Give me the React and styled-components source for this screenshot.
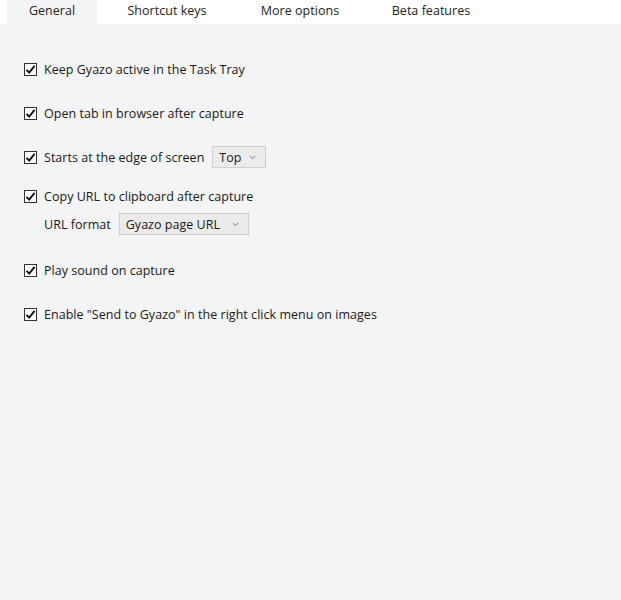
import React from "react";
import styled, { createGlobalStyle } from "styled-components";

const Global = createGlobalStyle`
  html, body { margin: 0; padding: 0; }
  body {
    background: #f3f4f5;
    font-family: "Open Sans", "Noto Sans", sans-serif;
    color: #1a1a1a;
  }
`;

const Page = styled.div`
  width: 621px;
  height: 600px;
  background: #f3f4f5;
  display: flex;
  flex-direction: column;
`;

const TabBar = styled.div`
  height: 24px;
  background: #ffffff;
  display: flex;
  align-items: stretch;
  padding-left: 7px;
`;

const Tab = styled.div`
  width: ${(p) => p.$w}px;
  display: flex;
  align-items: center;
  justify-content: center;
  font-size: 12.5px;
  letter-spacing: 0.03px;
  color: #222;
  background: ${(p) => (p.$active ? "#f3f4f5" : "#ffffff")};
  padding-bottom: 3px;
  box-sizing: border-box;
`;

const Content = styled.div`
  display: flex;
  flex-direction: column;
  padding: 34px 0 0 24px;
`;

const Row = styled.div`
  display: flex;
  align-items: center;
  height: 22px;
  margin-top: ${(p) => p.$mt || 0}px;
  padding-left: ${(p) => p.$indent || 0}px;
  font-size: 12.5px;
  letter-spacing: 0.03px;
`;

const Box = styled.span`
  width: 13px;
  height: 13px;
  box-sizing: border-box;
  border: 1px solid #333;
  background: #fff;
  display: inline-flex;
  align-items: center;
  justify-content: center;
  margin-right: 7px;
  flex-shrink: 0;
`;

const Label = styled.span`
  white-space: nowrap;
`;

const Select = styled.div`
  width: ${(p) => p.$w}px;
  height: 22px;
  box-sizing: border-box;
  border: 1px solid #cfcfcf;
  background: #ebebeb;
  margin-left: ${(p) => p.$ml}px;
  display: flex;
  align-items: center;
  justify-content: space-between;
  padding: 0 9px 0 6px;
  font-size: 12.5px;
`;

const Check = () => (
  <Box>
    <svg width="11" height="11" viewBox="0 0 11 11">
      <path d="M1.5 5.8 L4.2 8.6 L9.6 1.8" fill="none" stroke="#111" strokeWidth="1.9" />
    </svg>
  </Box>
);

const Chevron = () => (
  <svg width="7" height="5" viewBox="0 0 7 5">
    <path d="M0.8 1 L3.5 3.6 L6.2 1" fill="none" stroke="#777" strokeWidth="1" />
  </svg>
);

const CheckRow = ({ children, mt }) => (
  <Row $mt={mt}>
    <Check />
    <Label>{children}</Label>
  </Row>
);

export default function App() {
  return (
    <Page>
      <Global />
      <TabBar>
        <Tab $active $w={90}>General</Tab>
        <Tab $w={140}>Shortcut keys</Tab>
        <Tab $w={126}>More options</Tab>
        <Tab $w={136}>Beta features</Tab>
      </TabBar>
      <Content>
        <CheckRow>Keep Gyazo active in the Task Tray</CheckRow>
        <CheckRow mt={22}>Open tab in browser after capture</CheckRow>
        <Row $mt={22}>
          <Check />
          <Label>Starts at the edge of screen</Label>
          <Select $w={54} $ml={8}>
            <span>Top</span>
            <Chevron />
          </Select>
        </Row>
        <CheckRow mt={17}>Copy URL to clipboard after capture</CheckRow>
        <Row $mt={6} $indent={20}>
          <Label>URL format</Label>
          <Select $w={130} $ml={8}>
            <span>Gyazo page URL</span>
            <Chevron />
          </Select>
        </Row>
        <CheckRow mt={24}>Play sound on capture</CheckRow>
        <CheckRow mt={22}>Enable "Send to Gyazo" in the right click menu on images</CheckRow>
      </Content>
    </Page>
  );
}
